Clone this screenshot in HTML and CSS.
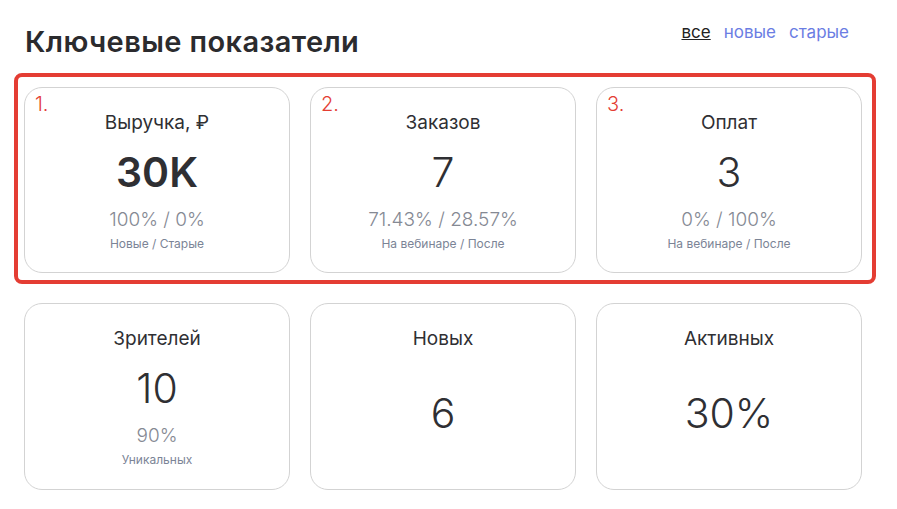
FILE: index.html
```html
<!DOCTYPE html>
<html>
  <head>
    <meta charset="UTF-8" />
    <title>Ключевые показатели</title>
    <link rel="stylesheet" href="styles.css">
  </head>
  <body>
    <div class="page">
      <div class="head">
        <h1>Ключевые показатели</h1>
        <nav class="filters">
          <a href="#" class="active">все</a>
          <a href="#">новые</a>
          <a href="#">старые</a>
        </nav>
      </div>

      <div class="highlight">
        <div class="grid">
          <div class="card">
            <span class="mark">1.</span>
            <div class="title">Выручка, ₽</div>
            <div class="value bold">30K</div>
            <div class="ratio">100% / 0%</div>
            <div class="caption">Новые / Старые</div>
          </div>
          <div class="card">
            <span class="mark">2.</span>
            <div class="title">Заказов</div>
            <div class="value">7</div>
            <div class="ratio">71.43% / 28.57%</div>
            <div class="caption">На вебинаре / После</div>
          </div>
          <div class="card">
            <span class="mark">3.</span>
            <div class="title">Оплат</div>
            <div class="value">3</div>
            <div class="ratio">0% / 100%</div>
            <div class="caption">На вебинаре / После</div>
          </div>
        </div>
      </div>

      <div class="grid second">
        <div class="card">
          <div class="title">Зрителей</div>
          <div class="value">10</div>
          <div class="ratio">90%</div>
          <div class="caption">Уникальных</div>
        </div>
        <div class="card">
          <div class="title">Новых</div>
          <div class="value solo">6</div>
        </div>
        <div class="card">
          <div class="title">Активных</div>
          <div class="value solo">30%</div>
        </div>
      </div>
    </div>
  </body>
</html>
```

FILE: styles.css
```css
body {
  margin: 0;
  background: #fff;
  font-family: Inter, "Noto Sans", sans-serif;
  color: #2f2f33;
}

.page {
  width: 838px;
  padding-left: 24px;
}

.head {
  display: flex;
  justify-content: space-between;
  align-items: flex-start;
  padding-top: 24px;
  box-sizing: border-box;
  height: 73px;
}

.head h1 {
  margin: 0 0 0 1px;
  font-size: 29px;
  font-weight: 600;
  line-height: 35px;
  color: #2b2b2e;
  letter-spacing: 0.4px;
}

.filters {
  display: flex;
  gap: 13px;
  margin-top: -2px;
  margin-right: 13px;
  font-size: 17px;
}

.filters a {
  color: #6b7de3;
  text-decoration: none;
}

.filters a.active {
  color: #222;
  text-decoration: underline;
}

.highlight {
  margin: 0 -14px 0 -10px;
  padding: 10px 10px 7px 6px;
  border: 4px solid #e43d33;
  border-radius: 8px;
}

.grid {
  display: grid;
  grid-template-columns: repeat(3, 266px);
  gap: 20px;
}

.grid.second {
  margin-top: 19px;
}

.card {
  position: relative;
  height: 186px;
  box-sizing: border-box;
  border: 1px solid #d3d3d3;
  border-radius: 18px;
  display: flex;
  flex-direction: column;
  align-items: center;
  padding-top: 23px;
}

.second .card {
  height: 187px;
}

.mark {
  position: absolute;
  top: 4px;
  left: 10px;
  font-size: 20px;
  font-weight: 300;
  color: #e43d33;
}

.title {
  font-size: 19px;
  line-height: 24px;
  color: #2f2f33;
}

.value {
  margin-top: 12px;
  font-size: 41px;
  line-height: 51px;
  font-weight: 300;
  color: #2f2f33;
}

.value.bold {
  font-weight: 600;
}

.value.solo {
  margin-top: 37px;
}

.ratio {
  margin-top: 10px;
  font-size: 19px;
  line-height: 24px;
  font-weight: 300;
  color: #858993;
}

.caption {
  margin-top: 4px;
  font-size: 12px;
  line-height: 16px;
  color: #7b8496;
}
```
